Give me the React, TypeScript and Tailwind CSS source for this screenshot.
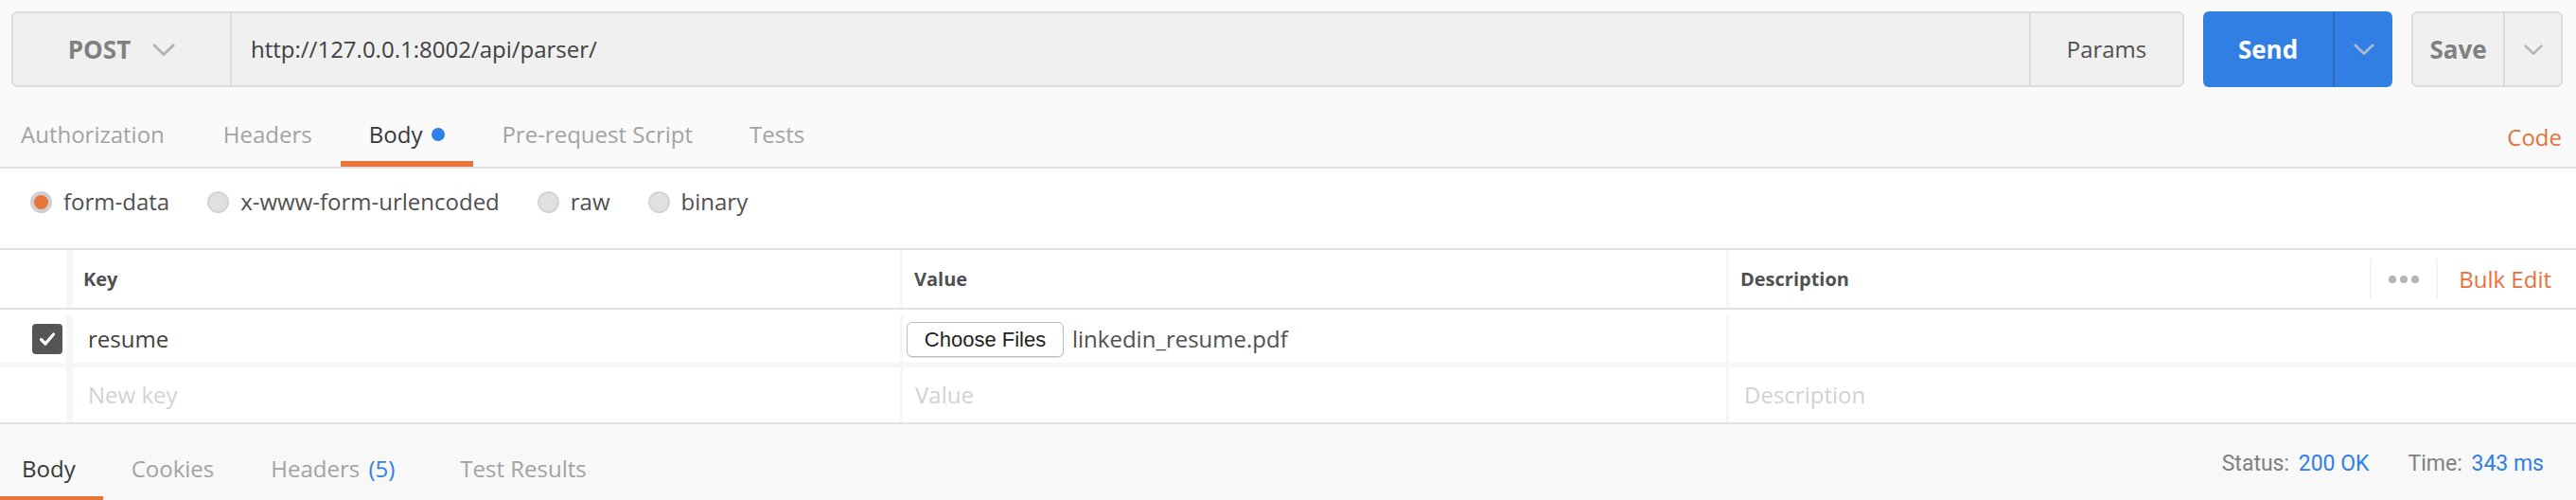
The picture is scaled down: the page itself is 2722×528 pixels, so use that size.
import React from 'react';

// chevron used by method picker and split buttons
const Chevron = ({ className }: { className?: string }) => (
  <svg viewBox="0 0 24 13" className={className} fill="none" stroke="currentColor" strokeWidth="3">
    <polyline points="1,1 12,11.5 23,1" />
  </svg>
);

const Radio = ({ checked, label }: { checked?: boolean; label: string }) => (
  <div className="flex items-center gap-[12px]">
    <span
      className={
        checked
          ? 'w-[23px] h-[23px] rounded-full border-[4px] border-[#cfcfcf] bg-[#e8763c]'
          : 'w-[23px] h-[23px] rounded-full border-2 border-[#d4d4d4] bg-[#e0e0e0]'
      }
    />
    <span className="text-[24px] text-[#505050] leading-[32px]">{label}</span>
  </div>
);

const requestTabs = ['Authorization', 'Headers', 'Body', 'Pre-request Script', 'Tests'];

export default function App() {
  return (
    <div className="w-[2722px] h-[528px] bg-[#fafafa] font-['Open_Sans',sans-serif] overflow-hidden">
      {/* url bar */}
      <div className="flex h-[80px] mt-[12px] ml-[12px] mr-[14px] gap-[20px]">
        <div className="flex flex-1 border-2 border-[#dcdcdc] rounded-[6px] bg-[#f0f0f0]">
          <div className="w-[231px] flex items-center justify-center gap-[23px] border-r-2 border-[#dcdcdc]">
            <span className="text-[26px] font-bold text-[#808080]">POST</span>
            <Chevron className="w-[24px] h-[13px] text-[#b4b4b4]" />
          </div>
          <div className="flex-1 flex items-center pl-[20px] text-[24px] text-[#404040]">
            http://127.0.0.1:8002/api/parser/
          </div>
          <div className="w-[162px] flex items-center justify-center border-l-2 border-[#dcdcdc] text-[24px] text-[#505050]">
            Params
          </div>
        </div>
        <div className="w-[200px] flex rounded-[6px] bg-[#327fe3]">
          <div className="w-[139px] flex items-center justify-center border-r-2 border-[#2c6bbf] text-[26px] font-bold text-white">
            Send
          </div>
          <div className="flex-1 flex items-center justify-center">
            <Chevron className="w-[22px] h-[12px] text-[#a9b9cf]" />
          </div>
        </div>
        <div className="w-[160px] flex rounded-[6px] border-2 border-[#dcdcdc] bg-[#f0f0f0]">
          <div className="w-[97px] flex items-center justify-center border-r-2 border-[#dcdcdc] text-[26px] font-bold text-[#808080]">
            Save
          </div>
          <div className="flex-1 flex items-center justify-center">
            <Chevron className="w-[20px] h-[11px] text-[#b4b4b4]" />
          </div>
        </div>
      </div>

      {/* request tabs */}
      <div className="flex h-[86px] border-b-2 border-[#e2e2e2]">
        {requestTabs.map((t, i) => (
          <div key={t} className="flex flex-col pt-[34px]">
            <div className={i === 0 ? 'flex items-center h-[32px] gap-[10px] pl-[22px] pr-[32px]' : 'flex items-center h-[32px] gap-[10px] px-[30px]'}>
              <span className={t === 'Body' ? 'text-[24px] text-[#383838]' : 'text-[24px] text-[#a3a3a3]'}>{t}</span>
              {t === 'Body' && <span className="w-[14px] h-[14px] rounded-full bg-[#2f7fe8]" />}
            </div>
            <div className="h-[12px]" />
            <div className={t === 'Body' ? 'h-[6px] bg-[#e8763c]' : 'h-[6px]'} />
          </div>
        ))}
        <div className="flex-1" />
        <div className="pt-[37px] pr-[15px] text-[24px] leading-[32px] text-[#e8703a]">Code</div>
      </div>

      {/* body type */}
      <div className="flex items-center h-[84px] pb-[14px] pl-[32px] gap-[40px] bg-white">
        <Radio checked label="form-data" />
        <Radio label="x-www-form-urlencoded" />
        <Radio label="raw" />
        <Radio label="binary" />
      </div>

      {/* params table */}
      <div className="bg-white border-t-2 border-[#e2e2e2]">
        <div className="flex h-[63px] border-b-2 border-[#e2e2e2] text-[20px] font-bold text-[#505050]">
          <div className="w-[70px]" />
          <div className="w-[881px] flex items-center pl-[11px] border-l-[7px] border-[#f6f6f6]">Key</div>
          <div className="w-[873px] flex items-center pl-[12px] border-l-[3px] border-[#f6f6f6]">Value</div>
          <div className="flex-1 flex items-center pl-[12px] border-l-[3px] border-[#f6f6f6]">
            <span className="flex-1">Description</span>
            <div className="flex items-center h-[43px] border-l-2 border-[#f3f3f3] px-[18px] gap-[4px]">
              <span className="w-[8px] h-[8px] rounded-full bg-[#b5b5b5]" />
              <span className="w-[8px] h-[8px] rounded-full bg-[#b5b5b5]" />
              <span className="w-[8px] h-[8px] rounded-full bg-[#b5b5b5]" />
            </div>
            <div className="flex items-center h-[43px] border-l-2 border-[#f3f3f3] pl-[22px] pr-[26px] text-[24px] font-normal text-[#e8703a]">
              Bulk Edit
            </div>
          </div>
        </div>

        <div className="flex h-[61px] pt-[6px] border-b-[5px] border-[#f6f6f6] text-[24px] text-[#404040]">
          <div className="w-[70px] flex items-center pl-[34px]">
            <span className="w-[32px] h-[32px] rounded-[4px] bg-[#555555] flex items-center justify-center">
              <svg viewBox="0 0 20 20" className="w-[20px] h-[20px]" fill="none" stroke="white" strokeWidth="3.2" strokeLinecap="round" strokeLinejoin="round">
                <polyline points="3.5,10.5 8,15 16.5,5" />
              </svg>
            </span>
          </div>
          <div className="w-[881px] flex items-center pl-[16px] border-l-[7px] border-[#f6f6f6]">resume</div>
          <div className="w-[873px] flex items-center pl-[4px] gap-[9px] border-l-[3px] border-[#f6f6f6]">
            <span className="h-[37px] w-[166px] flex items-center justify-center rounded-[6px] border border-[#bdbdbd] bg-white shadow-[0_1px_1px_rgba(0,0,0,0.12)] font-['Liberation_Sans',sans-serif] text-[22px] text-[#222]">
              Choose Files
            </span>
            <span className="text-[#505050]">linkedin_resume.pdf</span>
          </div>
          <div className="flex-1 border-l-[3px] border-[#f6f6f6]" />
        </div>

        <div className="flex h-[60px] border-b-2 border-[#e2e2e2] text-[24px] text-[#d2d2d2]">
          <div className="w-[70px]" />
          <div className="w-[881px] flex items-center pl-[16px] border-l-[7px] border-[#f6f6f6]">New key</div>
          <div className="w-[873px] flex items-center pl-[13px] border-l-[3px] border-[#f6f6f6]">Value</div>
          <div className="flex-1 flex items-center pl-[16px] border-l-[3px] border-[#f6f6f6]">Description</div>
        </div>
      </div>

      {/* response bar */}
      <div className="flex h-[80px] bg-[#f8f8f8] text-[24px]">
        <div className="flex flex-col pt-[31px]">
          <span className="h-[32px] leading-[32px] pl-[23px] pr-[29px] text-[#383838]">Body</span>
          <div className="h-[13px]" />
          <div className="h-[4px] bg-[#e8763c]" />
        </div>
        <div className="pt-[31px] px-[30px] leading-[32px] text-[#a3a3a3]">Cookies</div>
        <div className="pt-[31px] pl-[30px] pr-[39px] leading-[32px] text-[#a3a3a3]">
          Headers <span className="ml-[3px] text-[#2f7fe8]">(5)</span>
        </div>
        <div className="pt-[31px] px-[30px] leading-[32px] text-[#a3a3a3]">Test Results</div>
        <div className="flex-1" />
        <div className="flex pt-[26px] pr-[34px] gap-[41px] font-['Roboto',sans-serif] text-[23px] leading-[32px]">
          <span className="text-[#808080]">
            Status: <span className="ml-[4px] text-[#2f7fe8]">200 OK</span>
          </span>
          <span className="text-[#808080]">
            Time: <span className="ml-[4px] text-[#2f7fe8]">343 ms</span>
          </span>
        </div>
      </div>
    </div>
  );
}
